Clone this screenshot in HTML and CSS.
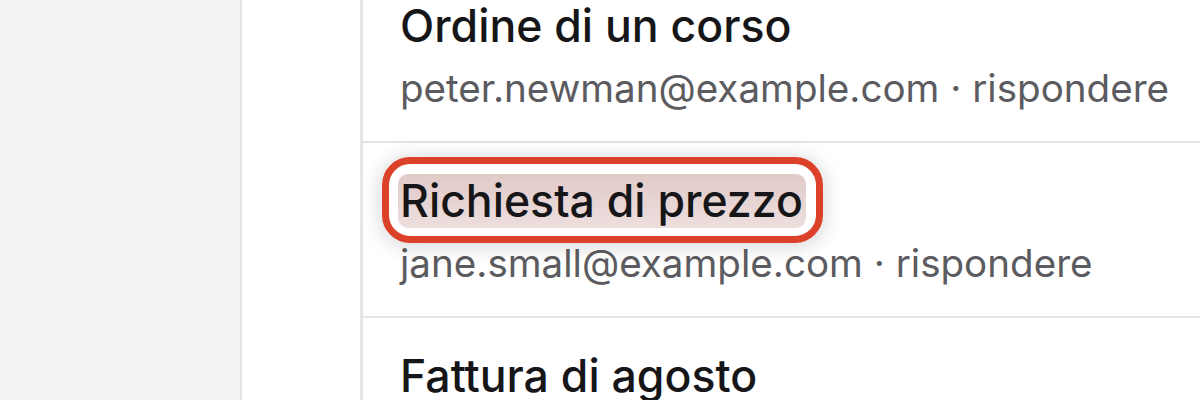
FILE: index.html
```html
<!DOCTYPE html>
<html lang="it">
<head>
    <meta charset="UTF-8">
    <meta name="viewport" content="width=device-width, initial-scale=1.0">
    <title>Posta in arrivo</title>
    <link rel="stylesheet" href="styles.css">
</head>
<body>
    <div class="app">
        <aside class="sidebar"></aside>
        <nav class="folders"></nav>
        <main class="inbox">
            <ul class="message-list">
                <li class="message">
                    <div class="message-subject">Ordine di un corso</div>
                    <div class="message-meta">peter.newman@example.com · rispondere</div>
                </li>
                <li class="message">
                    <div class="message-subject">
                        <span class="highlight">Richiesta di prezzo</span>
                    </div>
                    <div class="message-meta">jane.small@example.com · rispondere</div>
                </li>
                <li class="message">
                    <div class="message-subject">Fattura di agosto</div>
                    <div class="message-meta">mario.rossi@example.com · rispondere</div>
                </li>
            </ul>
        </main>
    </div>
</body>
</html>
```

FILE: styles.css
```css
* {
    box-sizing: border-box;
}
body {
    margin: 0;
    font-family: Inter, "Noto Sans", sans-serif;
    background-color: #ffffff;
    overflow: hidden;
}
.app {
    display: flex;
    height: 400px;
}
.sidebar {
    width: 242px;
    background-color: #f3f3f1;
    border-right: 2px solid #e4e4e2;
}
.folders {
    width: 121px;
    background-color: #ffffff;
    border-right: 3px solid #e6e6e4;
}
.inbox {
    flex: 1;
    overflow: hidden;
}
.message-list {
    list-style: none;
    margin: -32px 0 0 0;
    padding: 0;
}
.message {
    padding: 31px 0 30px 37px;
    border-bottom: 2px solid #e4e4e2;
}
.message-subject {
    font-size: 44.6px;
    font-weight: 500;
    line-height: 54px;
    color: #161619;
    white-space: nowrap;
}
.message-meta {
    margin-top: 12px;
    font-size: 38.6px;
    line-height: 46px;
    color: #5b5b60;
    white-space: nowrap;
}
.highlight {
    position: relative;
    display: inline-block;
    margin-left: -2px;
    padding: 0 3px 0 2px;
    border-radius: 10px;
    background: linear-gradient(#e0cac8, #eddfde);
}
.highlight::before {
    content: "";
    position: absolute;
    top: -17px;
    bottom: -15px;
    left: -16px;
    right: -17px;
    border: 7px solid #dc4129;
    border-radius: 28px;
    box-shadow: 0 2px 18px 4px rgba(0, 0, 0, 0.13);
}
```
